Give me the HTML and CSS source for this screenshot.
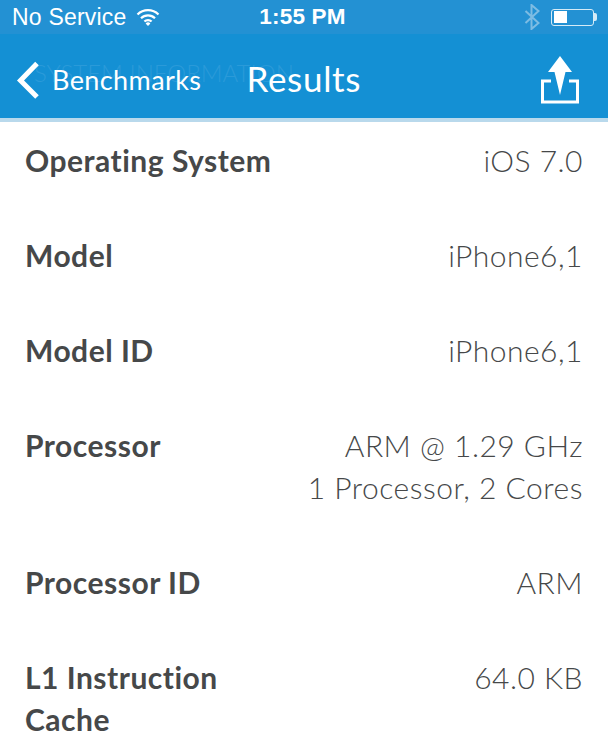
FILE: index.html
```html
<!DOCTYPE html>
<html lang="en">
<head>
<meta charset="UTF-8">
<meta name="viewport" content="width=device-width, initial-scale=1.0">
<title>Results</title>
<link rel="stylesheet" href="styles.css">
</head>
<body>
  <div class="status-bar">
    <div class="status-left">
      <span>No Service</span>
      <svg class="wifi" width="24" height="18" viewBox="0 0 24 18">
        <path d="M1.500 6.500a15 15 0 0 1 21 0M5 10.200a10 10 0 0 1 14 0M8.400 13.600a5 5 0 0 1 7.200 0" fill="none" stroke="#fff" stroke-width="2.200"/>
        <path d="M12 18l-2.400-2.600a3.400 3.400 0 0 1 4.800 0z" fill="#fff"/>
      </svg>
    </div>
    <div class="status-time">1:55 PM</div>
    <div class="status-right">
      <svg width="16" height="26" viewBox="0 0 16 26">
        <path d="M1.500 7l13 12-7 6V1l7 6-13 12" fill="none" stroke="#7dbce3" stroke-width="2"/>
      </svg>
      <div class="battery"><div class="battery-level"></div></div>
      <div class="battery-tip"></div>
    </div>
  </div>
  <div class="nav-bar">
    <div class="nav-ghost">SYSTEM INFORMATION</div>
    <a class="nav-back">
      <svg width="24" height="38" viewBox="0 0 24 38">
        <path d="M21 2.500L4.500 19.500 21 36" fill="none" stroke="#fff" stroke-width="5"/>
      </svg>
      <span>Benchmarks</span>
    </a>
    <div class="nav-title">Results</div>
    <svg class="nav-share" width="38" height="48" viewBox="0 0 38 48">
      <path d="M10 25H1.500v21h35V25H28" fill="none" stroke="#fff" stroke-width="3"/>
      <path d="M19 0L31 16H24.500L19 39 13.500 16H7z" fill="#fff"/>
    </svg>
  </div>
  <div class="info-list">
    <div class="info-row">
      <div class="info-label">Operating System</div>
      <div class="info-value">iOS 7.0</div>
    </div>
    <div class="info-row">
      <div class="info-label">Model</div>
      <div class="info-value">iPhone6,1</div>
    </div>
    <div class="info-row">
      <div class="info-label">Model ID</div>
      <div class="info-value">iPhone6,1</div>
    </div>
    <div class="info-row">
      <div class="info-label">Processor</div>
      <div class="info-value">ARM @ 1.29 GHz<br>1 Processor, 2 Cores</div>
    </div>
    <div class="info-row">
      <div class="info-label">Processor ID</div>
      <div class="info-value">ARM</div>
    </div>
    <div class="info-row">
      <div class="info-label">L1 Instruction Cache</div>
      <div class="info-value">64.0 KB</div>
    </div>
  </div>
</body>
</html>
```

FILE: styles.css
```css
body {
  margin: 0;
  background-color: #fff;
  font-family: Lato, "Open Sans", sans-serif;
  color: #464849;
}

.status-bar {
  height: 34px;
  display: grid;
  grid-template-columns: 1fr auto 1fr;
  align-items: center;
  padding: 0 11px 0 12px;
  background-color: #2391d3;
  color: #fff;
  font-family: "Liberation Sans", Arial, sans-serif;
  font-size: 23px;
  letter-spacing: 0.200px;
}

.status-left {
  display: flex;
  align-items: center;
  gap: 10px;
}

.status-time {
  font-weight: bold;
  font-size: 22.500px;
  margin-left: -4px;
}

.status-right {
  display: flex;
  align-items: center;
  justify-content: flex-end;
}

.status-right svg {
  margin-right: 11px;
}

.battery {
  box-sizing: border-box;
  width: 43px;
  height: 17px;
  border: 1.500px solid #d5ebf7;
  border-radius: 3px;
  padding: 1.500px;
}

.battery-level {
  width: 13px;
  height: 100%;
  background-color: #fff;
}

.battery-tip {
  width: 3px;
  height: 8px;
  background-color: #d5ebf7;
  border-radius: 0 2px 2px 0;
}

.nav-bar {
  position: relative;
  box-sizing: border-box;
  height: 88px;
  display: flex;
  align-items: center;
  padding: 7px 29px 0 16px;
  background-color: #1490d4;
  border-bottom: 4px solid #b9d9ec;
  color: #fff;
}

.nav-ghost {
  position: absolute;
  left: 34px;
  top: 24px;
  font-size: 24px;
  font-weight: 300;
  color: #2a9ad9;
  white-space: nowrap;
}

.nav-back {
  position: relative;
  display: flex;
  align-items: center;
  gap: 12px;
  font-size: 27px;
  letter-spacing: 0.400px;
}

.nav-title {
  position: relative;
  margin-left: 45px;
  margin-top: -4px;
  font-size: 35px;
  letter-spacing: 0.700px;
}

.nav-share {
  margin-left: auto;
}

.info-list {
  display: flex;
  flex-direction: column;
  gap: 53px;
  padding: 17px 25px 0;
}

.info-row {
  display: flex;
  justify-content: space-between;
  font-size: 30px;
  line-height: 42px;
}

.info-label {
  width: 262px;
  font-weight: bold;
  letter-spacing: 0.500px;
}

.info-value {
  text-align: right;
  font-weight: 300;
  letter-spacing: 0.500px;
}
```
